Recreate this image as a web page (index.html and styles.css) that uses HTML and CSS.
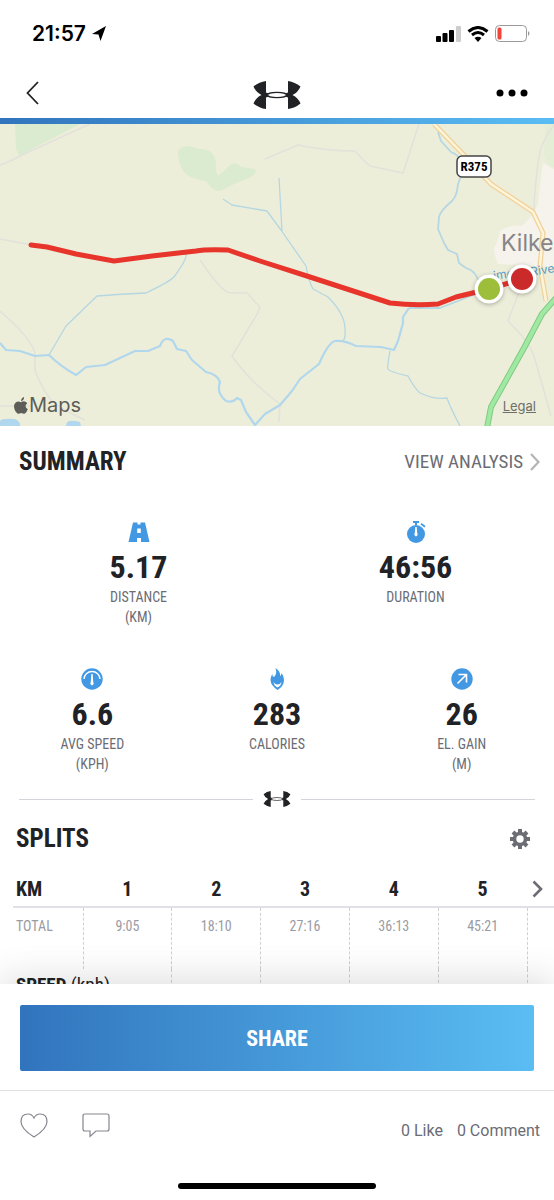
FILE: index.html
```html
<!DOCTYPE html>
<html lang="en">
<head>
  <meta charset="UTF-8" />
  <meta name="viewport" content="width=device-width, initial-scale=1.0" />
  <title>Workout</title>
  <link rel="stylesheet" href="styles.css">
</head>
<body>
  <!-- Shared logo shape -->
  <svg class="defs" width="0" height="0" aria-hidden="true">
    <symbol id="logo" viewBox="0 0 48 28">
      <path d="M0.500 5.500Q6 1 13 0V11.500L18 13.200V14.800L13 16.500V28Q6 27 0.500 22.500Q3 16.500 8.500 14Q3 11.500 0.500 5.500Z"/>
      <path d="M47.500 5.500Q42 1 35 0V11.500L30 13.200V14.800L35 16.500V28Q42 27 47.500 22.500Q45 16.500 39.500 14Q45 11.500 47.500 5.500Z"/>
      <ellipse cx="24" cy="14" rx="9.500" ry="2.600" fill="#fff" stroke="currentColor" stroke-width="1.200"/>
    </symbol>
  </svg>

  <div class="app">
    <!-- Status bar -->
    <div class="status-bar">
      <div class="status-time">
        <span>21:57</span>
        <svg width="14" height="15" viewBox="0 0 14 15"><path d="M14 0L8.500 15L6.500 8.500L0 8Z"/></svg>
      </div>
      <div class="status-icons">
        <svg width="25" height="16" viewBox="0 0 25 16">
          <rect x="0" y="10" width="5" height="6" rx="1"/>
          <rect x="6.500" y="7" width="5" height="9" rx="1"/>
          <rect x="13" y="4" width="5" height="12" rx="1"/>
          <rect x="20" y="0" width="5" height="16" rx="1" fill="#ccc"/>
        </svg>
        <svg width="22" height="16" viewBox="0 0 22 16">
          <path d="M1.500 5.500Q11 -2.500 20.500 5.500M5 9Q11 4 17 9" fill="none" stroke="#000" stroke-width="3"/>
          <path d="M7.500 12Q11 9.500 14.500 12L11 16Z"/>
        </svg>
        <svg width="36" height="17" viewBox="0 0 36 17">
          <rect x="0.500" y="0.500" width="31" height="16" rx="4" fill="none" stroke="#999"/>
          <rect x="2.500" y="2.500" width="4" height="12" rx="1.500" fill="#f04438"/>
          <path d="M33 6Q36 8.500 33 11Z" fill="#999"/>
        </svg>
      </div>
    </div>

    <!-- Navigation -->
    <header class="nav">
      <button class="icon-btn" aria-label="Back">
        <svg width="13" height="24" viewBox="0 0 13 24"><path d="M12 1L1.500 12L12 23" fill="none" stroke="#222" stroke-width="1.800"/></svg>
      </button>
      <svg class="nav-logo" width="48" height="28"><use href="#logo"/></svg>
      <button class="icon-btn right" aria-label="More">
        <svg width="32" height="8" viewBox="0 0 32 8"><circle cx="4" cy="4" r="3.500"/><circle cx="16" cy="4" r="3.500"/><circle cx="28" cy="4" r="3.500"/></svg>
      </button>
    </header>

    <main class="content">
      <!-- Route map -->
      <section class="map">
        <svg class="map-art" viewBox="0 0 554 302" preserveAspectRatio="xMidYMid slice">
          <rect width="554" height="302" fill="#edeeda"/>
          <g fill="#dbebcf">
            <path d="M15 0H80L19 32L16 25Z"/>
            <path d="M178 30Q178 22 188 22L200 25Q215 25 216 40Q215 48 218 52Q224 47 229 42Q235 36 241 43L255 45Q258 51 246 55L230 62Q222 67 217 67Q211 65 206 57Q196 56 187 51Q179 44 178 30Z"/>
            <path d="M546 0H554V43Q547 43 544 30Z" opacity=".5"/>
          </g>
          <path d="M554 45L543 39Q541 50 538 80L533 90L522 102Q511 100 500 107Q498 118 494 124Q494 131 498 140Q520 141 554 143Z" fill="#f5f3eb"/>

          <!-- Minor roads -->
          <g class="lane">
            <path d="M0 41Q12 37 22 31L90 0"/>
            <path d="M0 115L32 121"/>
            <path d="M200 136Q222 169 231 169H247L260 183Q258 190 253 197L232 232Q250 258 280 280L279 298"/>
            <path d="M0 187Q31 214 35 229V246Q38 257 50 275Q60 285 85 296"/>
            <path d="M0 282H32"/>
            <path d="M265 35L298 21Q325 27 355 27Q365 38 370 42L403 49L419 0"/>
            <path d="M554 1Q541 18 539 33Q535 58 534 85"/>
            <path d="M522 160L508 197Q528 216 534 232L551 292"/>
          </g>

          <!-- Rivers -->
          <g class="water">
            <path d="M0 219L6 226L20 227L35 232L49 231Q60 242 76 251Q80 248 86 243L105 241L135 227L148 227L160 222Q164 211 173 217L177 225L186 227L192 236L199 242L206 248Q217 250 220 258Q216 269 226 277Q233 279 237 274L241 276L246 288L255 301L265 290L280 281L292 267L300 255L319 240Q328 219 335 217Q344 216 356 222L381 223L394 226L398 217L403 199L403 193L409 184"/>
          </g>
          <g class="stream">
            <path d="M49 231L66 202L97 172Q120 170 146 169Q169 158 174 153Q187 135 186 131L183 126"/>
            <path d="M223 75L232 81L267 87L281 106L306 142Q309 158 313 165L328 173Q345 190 345 205Q346 215 342 218"/>
            <path d="M279 54L282 107"/>
            <path d="M390 227Q387 243 388 245Q390 248 408 252Q415 265 420 269Q435 276 447 274Q450 283 460 302"/>
          </g>
          <g class="brook">
            <path d="M438 8L441 17L451 28Q459 31 462 38L461 52L458 60Q457 72 452 77Q440 87 439 93L438 105L444 119L448 126L457 130L459 139L466 144Q477 147 480 162"/>
            <path d="M409 184L440 184L463 175L490 164"/>
          </g>
          <path d="M0 297Q1 294 15 295Q21 298 20 302H0ZM66 302Q66 294 80 298L81 302Z" fill="#b0d7ee"/>

          <!-- Main roads -->
          <path d="M434 0L462 29L491 60L533 88L543 109L540 142L546 177" fill="none" stroke="#efd29b" stroke-width="5"/>
          <path d="M434 0L462 29L491 60L533 88L543 109L540 142L546 177" fill="none" stroke="#fff4d9" stroke-width="2.500"/>
          <path d="M556 174L542 190L524 224L491 283L487 304" fill="none" stroke="#7fc985" stroke-width="6"/>
          <path d="M556 174L542 190L524 224L491 283L487 304" fill="none" stroke="#a0e9a3" stroke-width="4"/>

          <rect x="457" y="32" width="34" height="21" rx="5" fill="#fff" stroke="#444" stroke-width="1.500"/>
          <text x="474" y="47" class="road-label">R375</text>
          <text x="501" y="127" class="town-label">Kilke</text>
          <text transform="translate(494 156) rotate(-9)" class="river-label">imo</text>
          <text transform="translate(531 152) rotate(-9)" class="river-label">Rive</text>

          <!-- Route -->
          <path d="M31 121L47 123L76 130L114 137L152 132L196 127Q206 125 228 126L260 137L310 153L350 166L390 179Q415 182 438 180L456 173L489 165L522 155" class="route"/>
          <g class="pins">
            <circle cx="489" cy="165" r="14.500" fill="#fff"/>
            <circle cx="489" cy="165" r="11" fill="#9dbe3b"/>
            <circle cx="522" cy="155" r="14.500" fill="#fff"/>
            <circle cx="522" cy="155" r="11" fill="#cb2a2b"/>
          </g>
        </svg>
        <div class="map-credit">
          <svg width="14" height="17" viewBox="0 0 14 17"><path d="M10 0Q10.500 3 7 4.300Q6.800 1.300 10 0ZM7 5.300Q9 4 11 4.500Q12.500 5 13.300 6.200Q9.500 9 13.800 12.200Q12.500 15.500 11 16.500Q9.500 17 7.300 16Q4.800 17 3.500 16.500Q0 13.500 0 9Q.5 5 4 4.500Q5.500 4.500 7 5.300Z"/></svg>
          <span>Maps</span>
        </div>
        <a class="map-legal" href="#">Legal</a>
      </section>

      <!-- Summary -->
      <section class="summary">
        <div class="summary-head">
          <h2>SUMMARY</h2>
          <a href="#">VIEW ANALYSIS
            <svg width="10" height="18" viewBox="0 0 10 18"><path d="M1 1L8.500 9L1 17" fill="none" stroke="#b5b5b8" stroke-width="2.200"/></svg>
          </a>
        </div>

        <div class="stats">
          <div class="stat">
            <svg width="22" height="22" viewBox="0 0 22 22"><path fill-rule="evenodd" d="M5 1.500H9.500V3.500H12.500V1.500H17L21.500 21H13V17H9V21H0.500ZM9.200 7.500V12H12.800V7.500Z"/></svg>
            <strong>5.17</strong>
            <span>DISTANCE<br>(KM)</span>
          </div>
          <div class="stat">
            <svg width="22" height="22" viewBox="0 0 22 22"><path d="M8 0H14V2H12V4H10V2H8ZM16.500 2L20.500 5L19.500 6.500L15.500 3.500Z"/><circle cx="11" cy="13" r="9"/><path d="M10.300 6H11.700L12.200 12Q13.500 14 11 15.500Q8.500 14 9.800 12Z" fill="#fff"/></svg>
            <strong>46:56</strong>
            <span>DURATION</span>
          </div>
        </div>

        <div class="stats">
          <div class="stat">
            <svg width="22" height="22" viewBox="0 0 22 22"><circle cx="11" cy="11" r="10.700"/><path d="M3 11A8 7.500 0 0 1 19 11" fill="none" stroke="#fff" stroke-width="1.400"/><path d="M10.300 6H11.700L12.200 14Q13.500 16 11 17.500Q8.500 16 9.800 14Z" fill="#fff"/></svg>
            <strong>6.6</strong>
            <span>AVG SPEED<br>(KPH)</span>
          </div>
          <div class="stat">
            <svg width="22" height="22" viewBox="0 0 22 22"><path d="M9.500 0Q14.500 3 14 8Q15.500 7.500 15.500 5Q18 8 18 12Q18 18 11.500 22Q4.500 17 4.500 12Q4.500 9 6.500 5.500Q6 8.500 8 9Q11.500 6 9.500 0Z"/><path d="M7.500 14Q9 16.500 11.500 16.500Q14 16.500 15.500 14Q15 18 11.500 19.500Q8 18 7.500 14Z" fill="#fff"/></svg>
            <strong>283</strong>
            <span>CALORIES</span>
          </div>
          <div class="stat">
            <svg width="22" height="22" viewBox="0 0 22 22"><circle cx="11" cy="11" r="10.700"/><path d="M6.500 15.500L15 7M7.500 6.500H15.500V14.500" fill="none" stroke="#fff" stroke-width="1.600"/></svg>
            <strong>26</strong>
            <span>EL. GAIN<br>(M)</span>
          </div>
        </div>

        <div class="divider">
          <svg width="28" height="16"><use href="#logo"/></svg>
        </div>
      </section>

      <!-- Splits -->
      <section class="splits">
        <div class="splits-head">
          <h2>SPLITS</h2>
          <button class="icon-btn" aria-label="Settings">
            <svg width="20" height="20" viewBox="0 0 20 20" stroke="#6b6c74" fill="none">
              <circle cx="10" cy="10" r="5.500" stroke-width="3.600"/>
              <path d="M10 0V4M10 16V20M0 10H4M16 10H20M3 3L5.500 5.500M14.500 14.500L17 17M3 17L5.500 14.500M14.500 5.500L17 3" stroke-width="4"/>
            </svg>
          </button>
        </div>
        <table>
          <thead>
            <tr>
              <th class="row-name" scope="col">KM</th>
              <th scope="col">1</th>
              <th scope="col">2</th>
              <th scope="col">3</th>
              <th scope="col">4</th>
              <th scope="col">5</th>
              <th class="more">
                <button class="icon-btn" aria-label="Next splits">
                  <svg width="11" height="18" viewBox="0 0 11 18"><path d="M1.500 1.500L9 9L1.500 16.500" fill="none" stroke="#6b6c74" stroke-width="2.600"/></svg>
                </button>
              </th>
            </tr>
          </thead>
          <tbody>
            <tr class="total">
              <th class="row-name" scope="row">TOTAL</th>
              <td>9:05</td>
              <td>18:10</td>
              <td>27:16</td>
              <td>36:13</td>
              <td>45:21</td>
              <td></td>
            </tr>
            <tr class="speed">
              <th class="row-name" colspan="2" scope="row">SPEED <span>(kph)</span></th>
              <td></td>
              <td></td>
              <td></td>
              <td></td>
              <td></td>
            </tr>
          </tbody>
        </table>
      </section>
    </main>

    <!-- Share and feedback -->
    <footer class="footer">
      <div class="share">
        <button class="share-btn">SHARE</button>
      </div>
      <div class="social">
        <button class="icon-btn" aria-label="Like">
          <svg width="28" height="25" viewBox="0 0 28 25"><path d="M14 24Q1 16 1 8.500Q1 1 8 1Q12 1 14 5Q16 1 20 1Q27 1 27 8.500Q27 16 14 24Z" fill="none" stroke="#85868f" stroke-width="1.200"/></svg>
        </button>
        <button class="icon-btn" aria-label="Comment">
          <svg width="28" height="25" viewBox="0 0 28 25"><path d="M3 1H25Q27 1 27 3V16Q27 18 25 18H14L8 23.500V18H3Q1 18 1 16V3Q1 1 3 1Z" fill="none" stroke="#85868f" stroke-width="1.200"/></svg>
        </button>
        <div class="counts">
          <span>0 Like</span>
          <span>0 Comment</span>
        </div>
      </div>
      <div class="home-bar"></div>
    </footer>
  </div>
</body>
</html>
```
FILE: styles.css
```css
* {
  box-sizing: border-box;
}

body {
  margin: 0;
  background: #fff;
  color: #212225;
  font-family: "Roboto Condensed", "Liberation Sans Narrow", Roboto, sans-serif;
}

.defs {
  position: absolute;
}

.app {
  display: flex;
  flex-direction: column;
  height: 100vh;
}

h2 {
  margin: 0;
  font-size: 25px;
  line-height: 28px;
  font-weight: bold;
}

a {
  color: inherit;
}

svg {
  display: block;
}

.icon-btn {
  display: flex;
  padding: 0;
  border: 0;
  background: none;
  cursor: pointer;
}

/* Status bar */
.status-bar {
  display: flex;
  justify-content: space-between;
  align-items: center;
  height: 67px;
  padding: 0 23px 0 32px;
  color: #000;
}

.status-time,
.status-icons {
  display: flex;
  align-items: center;
  gap: 6px;
}

.status-time {
  font-family: Inter, sans-serif;
  font-size: 21px;
  font-weight: 600;
}

/* Navigation */
.nav {
  display: grid;
  grid-template-columns: 1fr auto 1fr;
  align-items: center;
  height: 57px;
  padding: 0 26px;
  border-bottom: 6px solid;
  border-image: linear-gradient(to right, #3174bd, #5abdf3) 1;
}

.nav-logo {
  margin-top: 4px;
  color: #212225;
  fill: #212225;
}

.right {
  justify-self: end;
}

/* Scrolling part */
.content {
  flex: 1;
  min-height: 0;
  overflow-y: auto;
  scrollbar-width: none;
}

/* Map */
.map {
  position: relative;
  height: 302px;
}

.map-art {
  width: 100%;
  height: 100%;
}

.lane,
.water,
.stream,
.brook {
  fill: none;
  stroke-linejoin: round;
}

.lane {
  stroke: #e2e1da;
  stroke-width: 1.5px;
}

.water {
  stroke: #b0d7ec;
  stroke-width: 2.2px;
}

.stream {
  stroke: #b4d7e2;
  stroke-width: 1.3px;
}

.brook {
  stroke: #b4d7e2;
  stroke-width: 1.8px;
}

.route {
  fill: none;
  stroke: #e7352b;
  stroke-width: 5px;
  stroke-linecap: round;
  stroke-linejoin: round;
}

.pins {
  filter: drop-shadow(0 1px 2px rgba(0, 0, 0, 0.3));
}

.road-label {
  font-size: 13px;
  font-weight: bold;
  text-anchor: middle;
}

.town-label {
  fill: #85858a;
  font-family: Inter, sans-serif;
  font-size: 23px;
}

.river-label {
  fill: #5b9bc4;
  font-family: Inter, sans-serif;
  font-size: 12px;
}

.map-credit {
  position: absolute;
  left: 14px;
  bottom: 8px;
  display: flex;
  align-items: center;
  gap: 1px;
  color: #5d5e57;
  fill: #5d5e57;
  font-family: Inter, sans-serif;
  font-size: 20px;
  line-height: 26px;
}

.map-legal {
  position: absolute;
  right: 18px;
  bottom: 12px;
  color: #6e6f68;
  font-family: Inter, sans-serif;
  font-size: 13px;
  line-height: 16px;
}

/* Summary */
.summary-head {
  display: flex;
  justify-content: space-between;
  align-items: center;
  height: 71px;
  padding: 0 14px 0 19px;
}

.summary-head a {
  display: flex;
  align-items: center;
  gap: 7px;
  color: #6b6c74;
  font-size: 19px;
  text-decoration: none;
}

.stats {
  display: flex;
  padding-top: 24px;
  padding-bottom: 17px;
}

.stat {
  flex: 1;
  display: flex;
  flex-direction: column;
  align-items: center;
  height: 106px;
  text-align: center;
}

.stat svg {
  fill: #4298e3;
}

.stat strong {
  padding: 8px 0 4px;
  font-size: 32px;
  line-height: 32px;
}

.stat span {
  color: #6b6c74;
  font-size: 14px;
  line-height: 20px;
}

.divider {
  display: flex;
  align-items: center;
  gap: 10px;
  padding: 0 19px;
}

.divider svg {
  color: #212225;
  fill: #212225;
}

.divider::before,
.divider::after {
  content: "";
  flex: 1;
  border-top: 1px solid #d4d4da;
}

/* Splits */
.splits {
  padding-left: 13px;
}

.splits-head {
  display: flex;
  justify-content: space-between;
  align-items: center;
  height: 64px;
  padding: 0 24px 0 3px;
}

table {
  width: 100%;
  table-layout: fixed;
  border-collapse: collapse;
}

th,
td {
  padding: 0;
  text-align: center;
}

thead th {
  height: 36px;
  border-bottom: 2px solid #e0e0e6;
  font-size: 20px;
}

.row-name {
  width: 70px;
  padding-left: 3px;
  text-align: left;
}

.more {
  width: 27px;
}

.more button {
  padding-left: 5px;
}

.total th,
.total td {
  height: 62px;
  padding-top: 8px;
  color: #9a9ba3;
  font-size: 14px;
  font-weight: normal;
  line-height: 20px;
  vertical-align: top;
}

tbody td {
  border-left: 1px dashed #d0d0d4;
}

.speed th {
  height: 30px;
  font-size: 19px;
}

.speed span {
  font-weight: normal;
}

/* Footer */
.footer {
  position: relative;
  background: #fff;
  box-shadow: 0 -4px 36px rgba(0, 0, 0, 0.14);
}

.share {
  padding: 21px 20px 19px;
  border-bottom: 1px solid #e2e2e6;
}

.share-btn {
  width: 100%;
  height: 66px;
  border: 0;
  border-radius: 2px;
  background: linear-gradient(to right, #3174bd, #5abdf3);
  color: #fff;
  font: bold 22px "Roboto Condensed", "Liberation Sans Narrow", Roboto, sans-serif;
  cursor: pointer;
}

.social {
  display: flex;
  align-items: center;
  gap: 34px;
  height: 68px;
  padding: 0 14px 0 20px;
}

.counts {
  display: flex;
  gap: 14px;
  margin-left: auto;
  padding-top: 10px;
  color: #6b6c74;
  font-family: Roboto, sans-serif;
  font-size: 16px;
}

.home-bar {
  width: 198px;
  height: 6px;
  margin: 24px auto 11px;
  border-radius: 3px;
  background: #000;
}
```
